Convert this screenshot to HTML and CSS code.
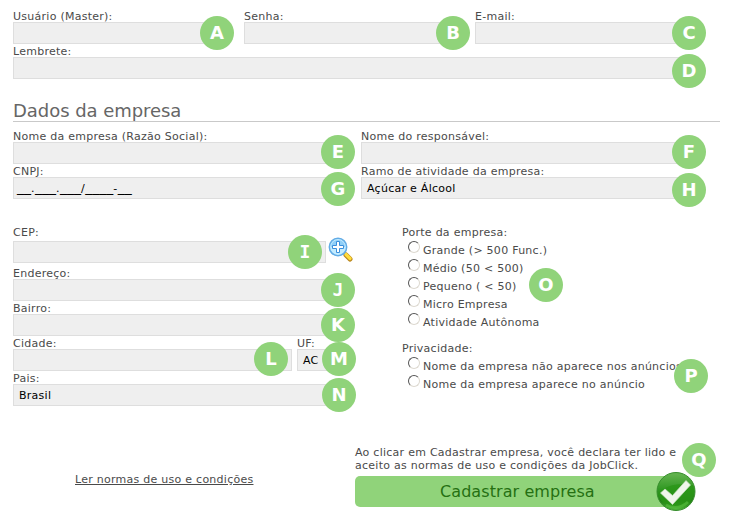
FILE: index.html
```html
<!DOCTYPE html>
<html lang="pt-BR">
<head>
<meta charset="utf-8">
<title>Cadastro de empresa</title>
<link rel="stylesheet" href="styles.css">
</head>
<body>
<main class="page">
  <section class="account">
    <div class="field login"><label>Usuário (Master):</label><div class="box"></div></div>
    <div class="field login"><label>Senha:</label><div class="box"></div></div>
    <div class="field login"><label>E-mail:</label><div class="box"></div></div>
    <div class="field wide"><label>Lembrete:</label><div class="box"></div></div>
  </section>
  <h2><span>Dados da empresa</span></h2>
  <section class="company">
    <div class="field"><label>Nome da empresa (Razão Social):</label><div class="box"></div></div>
    <div class="field"><label>Nome do responsável:</label><div class="box"></div></div>
    <div class="field"><label>CNPJ:</label><div class="box mask">__<i>.</i>___<i>.</i>___<i>/</i>____<i>-</i>__</div></div>
    <div class="field"><label>Ramo de atividade da empresa:</label><div class="box">Açúcar e Álcool</div></div>
  </section>
  <div class="details">
    <section class="address">
      <div class="field cep"><label>CEP:</label>
        <div class="lookup"><div class="box"></div>
          <svg class="magnifier" width="26" height="26" viewBox="0 0 26 26">
            <path d="M16 16l2.500 2.500" stroke="#8aa6c4" stroke-width="3"/>
            <path d="M18 18l4 4" stroke="#b9851b" stroke-width="5" stroke-linecap="round"/>
            <path d="M18 17.500l4 4" stroke="#ffdc3c" stroke-width="3.200" stroke-linecap="round"/>
            <circle cx="10" cy="10" r="8.700" fill="#c4ecff" stroke="#62ace6" stroke-width="1.500"/>
            <path d="M3 10a7 7 0 0 1 14 0z" fill="#8fcff8"/>
            <path d="M8.500 4.500h3v4h4v3h-4v4h-3v-4h-4v-3h4z" fill="#fff" stroke="#3a8fdc"/>
          </svg>
        </div>
      </div>
      <div class="field"><label>Endereço:</label><div class="box"></div></div>
      <div class="field"><label>Bairro:</label><div class="box"></div></div>
      <div class="city">
        <div class="field"><label>Cidade:</label><div class="box"></div></div>
        <div class="field"><label>UF:</label><div class="box">AC</div></div>
      </div>
      <div class="field"><label>Pais:</label><div class="box">Brasil</div></div>
    </section>
    <section class="choices">
      <p>Porte da empresa:</p>
      <ul>
        <li><i class="radio"></i><span>Grande (&gt; 500 Func.)</span></li>
        <li><i class="radio"></i><span>Médio (50 &lt; 500)</span></li>
        <li><i class="radio"></i><span>Pequeno ( &lt; 50)</span></li>
        <li><i class="radio"></i><span>Micro Empresa</span></li>
        <li><i class="radio"></i><span>Atividade Autônoma</span></li>
      </ul>
      <p>Privacidade:</p>
      <ul>
        <li><i class="radio"></i><span>Nome da empresa não aparece nos anúncios</span></li>
        <li><i class="radio"></i><span>Nome da empresa aparece no anúncio</span></li>
      </ul>
    </section>
  </div>
  <footer>
    <a class="terms">Ler normas de uso e condições</a>
    <div class="submit">
      <p>Ao clicar em Cadastrar empresa, você declara ter lido e<br>aceito as normas de uso e condições da JobClick.</p>
      <div class="button"><span>Cadastrar empresa</span>
        <svg class="check" width="40" height="40" viewBox="0 0 40 40">
          <defs><linearGradient id="ball" x1="0" y1="0" x2="0" y2="1"><stop offset="0" stop-color="#67b552"/><stop offset=".45" stop-color="#309822"/><stop offset=".75" stop-color="#238116"/><stop offset="1" stop-color="#4fb53a"/></linearGradient></defs>
          <circle cx="20" cy="19.500" r="19" fill="url(#ball)" stroke="#368d2c"/>
          <path d="M2 22C12 10 26 12 37 13a18 18 0 0 1-6 20C20 39 5 34 2 22z" fill="#299615" opacity=".75"/>
          <path d="M10 33q12 6 22-3" fill="none" stroke="#5bc142" stroke-width="3" opacity=".6"/>
          <path d="M4.500 21l4.500-4 7.500 6.500L30 8.500l4.500 4.500L16.500 32.500z" fill="#f0f6eb" stroke="#c7dfbf" stroke-width=".7"/>
        </svg>
      </div>
    </div>
  </footer>
  <b class="badge a">A</b><b class="badge b">B</b><b class="badge c">C</b><b class="badge d">D</b>
  <b class="badge e">E</b><b class="badge f">F</b><b class="badge g">G</b><b class="badge h">H</b>
  <b class="badge slab i">I</b><b class="badge slab j">J</b><b class="badge k">K</b><b class="badge l">L</b>
  <b class="badge m">M</b><b class="badge n">N</b><b class="badge o">O</b><b class="badge p">P</b>
  <b class="badge q">Q</b>
</main>
</body>
</html>
```
FILE: styles.css
```css
* { box-sizing: border-box; }
body { margin: 0; background: #fff; color: #4a4a4a; font: 11px/13px Verdana, "DejaVu Sans", sans-serif; letter-spacing: .26px; }
p, ul, h2 { margin: 0; padding: 0; font-weight: 400; }
ul { list-style: none; }
.page { position: relative; width: 734px; height: 524px; padding: 9px 14px 0 13px; overflow: hidden; }
label, .choices p { display: block; height: 13px; line-height: 15px; white-space: nowrap; }
.box { height: 22px; border: 1px solid #dedede; background: #efefef; color: #000; padding-left: 5px; line-height: 22px; letter-spacing: .27px; white-space: nowrap; }
.mask { padding-left: 3px; font-size: 14px; line-height: 19px; letter-spacing: 0; }
.mask i { font-size: 11px; font-style: normal; letter-spacing: .5px; }
.account { display: grid; grid-template-columns: 215px 215px 215px; column-gap: 16px; }
.wide { grid-column: 1 / -1; }
h2 { height: 43px; padding-top: 21px; border-bottom: 1px solid #c9c9c9; font-size: 18px; line-height: 22px; color: #666; letter-spacing: -.05px; }
.company { display: grid; grid-template-columns: 327px 329px; column-gap: 21px; margin-top: 7px; }
.details { display: flex; gap: 49px; margin-top: 26px; }
.address { width: 340px; }
.address .field { width: 327px; }
.cep { height: 41px; }
.lookup { display: flex; padding-top: 3px; }
.lookup .box { flex: none; width: 313px; }
.magnifier { flex: none; margin: -4px 0 0 2px; }
.city { display: flex; gap: 5px; width: 327px; }
.city .field:first-child { width: 279px; }
.city .field:last-child { width: 43px; }
.choices ul { padding-top: 3px; margin-bottom: 10px; }
.choices li { display: flex; height: 18px; padding-left: 6px; white-space: nowrap; }
.choices li span { line-height: 20px; margin-left: 3px; }
.radio { width: 12px; height: 12px; border-radius: 50%; border: 1.500px solid; border-color: #555 #ddd9d0 #ddd9d0 #555; background: #fff; }
footer { display: flex; padding-top: 40px; }
.terms { width: 180px; height: 13px; margin: 27px 100px 0 62px; text-decoration: underline; white-space: nowrap; }
.submit p { white-space: nowrap; }
.button { position: relative; width: 322px; height: 31px; margin-top: 4px; padding-left: 85px; border-radius: 5px; background: #90d37a; color: #257012; font-size: 16px; line-height: 31px; letter-spacing: .08px; white-space: nowrap; }
.check { position: absolute; left: 301px; top: -4px; }
.badge { position: absolute; width: 34px; height: 34px; border-radius: 50%; background: #90d37a; color: #fff; font-size: 18px; line-height: 33px; text-align: center; letter-spacing: 0; }
.slab { font-family: "DejaVu Sans Mono", monospace; }
.a { left: 200px; top: 16px; } .b { left: 436px; top: 16px; } .c { left: 672px; top: 16px; } .d { left: 672px; top: 54px; }
.e { left: 321px; top: 135px; } .f { left: 672px; top: 135px; } .g { left: 321px; top: 172px; } .h { left: 672px; top: 173px; }
.i { left: 288px; top: 235px; } .j { left: 321px; top: 273px; } .k { left: 321px; top: 308px; } .l { left: 254px; top: 342px; }
.m { left: 322px; top: 342px; } .n { left: 322px; top: 378px; } .o { left: 529px; top: 268px; } .p { left: 674px; top: 359px; }
.q { left: 682px; top: 443px; }
```
